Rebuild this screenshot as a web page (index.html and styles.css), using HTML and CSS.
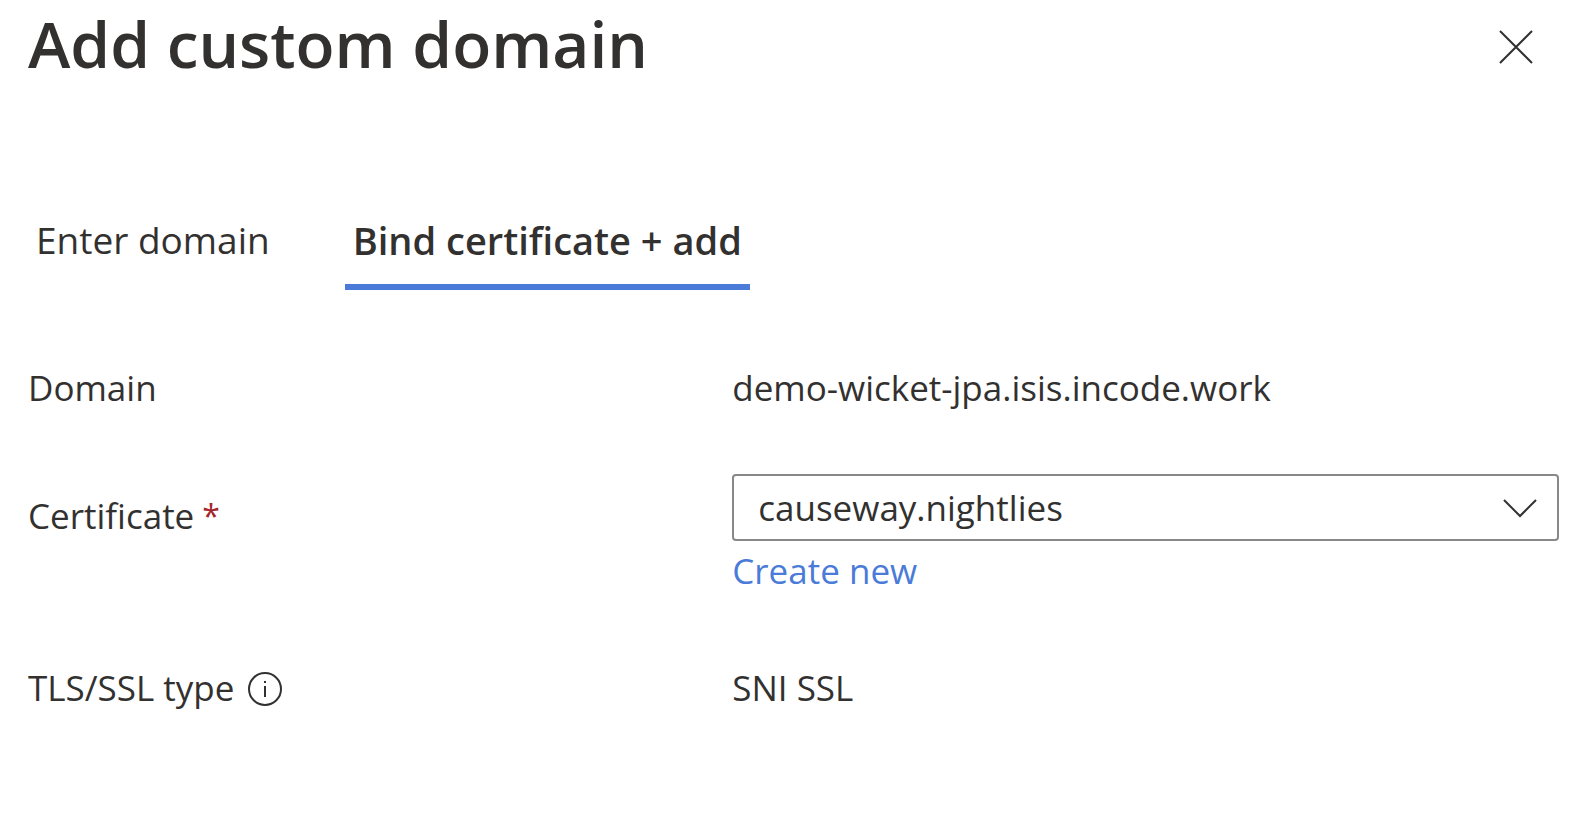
FILE: index.html
```html
<!DOCTYPE html>
<html lang="en">
<head>
<meta charset="utf-8">
<title>Add custom domain</title>
<link rel="stylesheet" href="styles.css">
</head>
<body>
<main class="panel">
  <header class="header">
    <h1 class="title">Add custom domain</h1>
    <button class="close" type="button" aria-label="Close">
      <svg class="close-icon" viewBox="0 0 36 36" aria-hidden="true"><path d="M2 2 34 34M34 2 2 34"/></svg>
    </button>
  </header>
  <nav class="tabs" role="tablist">
    <button class="tab" type="button" role="tab" aria-selected="false">Enter domain</button>
    <button class="tab tab-active" type="button" role="tab" aria-selected="true">Bind certificate + add</button>
  </nav>
  <form class="form">
    <div class="row row-domain">
      <span class="label">Domain</span>
      <output class="value">demo-wicket-jpa.isis.incode.work</output>
    </div>
    <div class="row row-certificate">
      <label class="label label-field" for="certificate">Certificate <span class="required">*</span></label>
      <div class="field">
        <div class="select-wrap">
          <select class="select" id="certificate" required>
            <option>causeway.nightlies</option>
          </select>
          <svg class="chevron" viewBox="0 0 34 20" aria-hidden="true"><path d="M1 2 17 18 33 2"/></svg>
        </div>
        <a class="link" href="#create">Create new</a>
      </div>
    </div>
    <div class="row">
      <span class="label label-info">TLS/SSL type
        <svg class="info" viewBox="0 0 34 34" role="img" aria-label="Information"><circle cx="17" cy="17" r="16"/><path d="M17 14V25M17 9V11"/></svg>
      </span>
      <output class="value">SNI SSL</output>
    </div>
  </form>
</main>
</body>
</html>
```
FILE: styles.css
```css
* { box-sizing: border-box; }
body {
  margin: 0;
  background: #fff;
  color: #323130;
  font: 35px/48px "Open Sans", "Noto Sans", sans-serif;
}
button, select { font: inherit; color: inherit; }
.panel { padding: 0 26px 0 28px; }
.header { display: flex; justify-content: space-between; align-items: start; height: 94px; }
.title { margin: 0; font-size: 64px; line-height: 88px; font-weight: 600; }
.close { align-self: center; margin-right: 17px; padding: 8px; border: 0; background: none; }
.close-icon { display: block; width: 36px; height: 36px; fill: none; stroke: #323130; stroke-width: 2; }
.tabs { display: flex; gap: 67px; margin-top: 122px; }
.tab { padding: 0 8px 20px; border: 0; border-bottom: 6px solid transparent; background: none; font-size: 37px; }
.tab-active { font-size: 38px; font-weight: 600; border-color: #4a7bd8; }
.form { margin-top: 74px; }
.row { display: grid; grid-template-columns: 46% 1fr; align-items: start; }
.row-domain { margin-bottom: 62px; }
.row-certificate { margin-bottom: 69px; }
.label { display: flex; align-items: center; gap: 8px; }
.label-field { padding-top: 18px; }
.label-info { gap: 14px; }
.required { color: #a4262c; font-size: 32px; }
.select-wrap { display: grid; align-items: center; }
.select, .chevron { grid-area: 1 / 1; }
.select { appearance: none; width: 100%; height: 67px; padding: 0 24px; border: 2px solid #8a8886; border-radius: 4px; background: #fff; }
.chevron { justify-self: end; width: 34px; height: 20px; margin-right: 22px; fill: none; stroke: #323130; stroke-width: 2; pointer-events: none; }
.link { display: inline-block; margin-top: 6px; color: #4a7bd8; text-decoration: none; }
.info { width: 34px; height: 34px; margin-top: 2px; fill: none; stroke: #323130; stroke-width: 2; }
```
